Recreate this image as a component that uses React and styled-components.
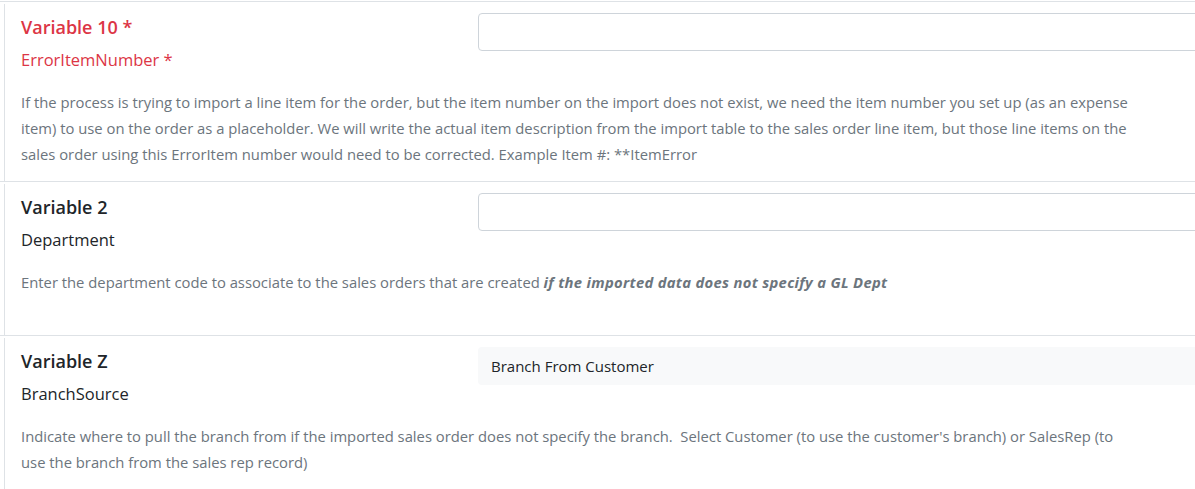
import React from 'react';
import styled, { createGlobalStyle } from 'styled-components';

const GlobalStyle = createGlobalStyle`
  html, body {
    margin: 0;
    padding: 0;
    background: #fff;
    overflow: hidden;
  }
  body {
    font-family: "Open Sans", "Noto Sans", sans-serif;
    color: #212529;
  }
`;

const variables = [
  {
    title: 'Variable 10 *',
    name: 'ErrorItemNumber *',
    required: true,
    kind: 'input',
    description: (
      <>
        If the process is trying to import a line item for the order, but the item number on the import does not exist, we need the item number you set up (as an expense item) to use on the order as a placeholder. We will write the actual item description from the import table to the sales order line item, but those line items on the sales order using this ErrorItem number would need to be corrected. Example Item #: **ItemError
      </>
    ),
  },
  {
    title: 'Variable 2',
    name: 'Department',
    kind: 'input',
    description: (
      <>
        Enter the department code to associate to the sales orders that are created <strong><em>if the imported data does not specify a GL Dept</em></strong>
      </>
    ),
  },
  {
    title: 'Variable Z',
    name: 'BranchSource',
    kind: 'readonly',
    value: 'Branch From Customer',
    description: (
      <>
        Indicate where to pull the branch from if the imported sales order does not specify the branch.&nbsp; Select Customer (to use the customer's branch) or SalesRep (to use the branch from the sales rep record)
      </>
    ),
  },
];

function App() {
  return (
    <>
      <GlobalStyle />
      <List>
        {variables.map((v) => (
          <Item key={v.name}>
            <Card>
              <Header>
                <Labels>
                  <Title $required={v.required}>{v.title}</Title>
                  <Name $required={v.required}>{v.name}</Name>
                </Labels>
                {v.kind === 'input' ? (
                  <TextInput type="text" />
                ) : (
                  <ReadOnly>{v.value}</ReadOnly>
                )}
              </Header>
              <Description>{v.description}</Description>
            </Card>
          </Item>
        ))}
      </List>
    </>
  );
}

export default App;

const List = styled.div`
  width: 1300px;
  padding-top: 1px;
`;

const Item = styled.div`
  border-top: 1px solid #dee2e6;
  padding-top: 2px;
`;

const Card = styled.div`
  margin-left: 4px;
  border-left: 1px solid #dee2e6;
  padding: 9px 0 14px 16px;
`;

const Header = styled.div`
  display: grid;
  grid-template-columns: 457px 1fr;
  align-items: start;
`;

const Labels = styled.div`
  display: flex;
  flex-direction: column;
  gap: 8px;
  padding-top: 1px;
`;

const Title = styled.div`
  font-size: 18px;
  line-height: 26px;
  font-weight: 600;
  color: ${(p) => (p.$required ? '#dc3545' : '#212529')};
`;

const Name = styled.div`
  font-size: 16.5px;
  line-height: 24px;
  color: ${(p) => (p.$required ? '#dc3545' : '#212529')};
`;

const TextInput = styled.input`
  box-sizing: border-box;
  height: 38px;
  width: 100%;
  margin: 0;
  border: 1px solid #ced4da;
  border-radius: 4px;
  background: #fff;
  padding: 6px 12px;
  font-family: inherit;
  font-size: 15px;
  outline: none;
`;

const ReadOnly = styled.div`
  box-sizing: border-box;
  height: 38px;
  display: flex;
  align-items: center;
  padding: 0 13px;
  background: #f8f9fa;
  border-radius: 4px;
  font-size: 15px;
  color: #212529;
`;

const Description = styled.p`
  margin: 17px 0 0;
  max-width: 1112px;
  min-height: 52px;
  font-size: 14.8px;
  line-height: 26px;
  color: #6c757d;

  strong {
    font-weight: 700;
    letter-spacing: 0.3px;
  }
`;
